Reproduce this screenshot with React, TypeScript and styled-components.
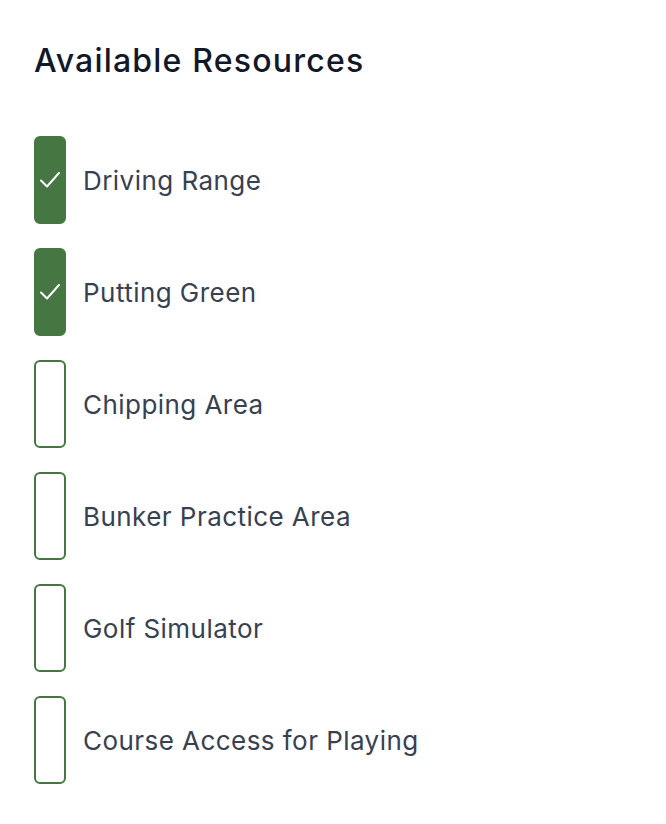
import React, { useState } from "react";
import styled, { createGlobalStyle } from "styled-components";

const Global = createGlobalStyle`
  html, body { margin: 0; padding: 0; background: #ffffff; }
  body { font-family: Inter, "Noto Sans", sans-serif; -webkit-font-smoothing: antialiased; }
`;

const Page = styled.div`
  padding: 41px 34px;
`;

const Title = styled.h2`
  margin: 0 0 55px 0;
  font-size: 32px;
  line-height: 40px;
  font-weight: 500;
  color: #111827;
  letter-spacing: 1.2px;
`;

const List = styled.div`
  display: flex;
  flex-direction: column;
  gap: 24px;
`;

const Row = styled.label`
  display: flex;
  align-items: center;
  gap: 17px;
  height: 88px;
  cursor: pointer;
`;

const Box = styled.span<{ $checked: boolean }>`
  box-sizing: border-box;
  width: 32px;
  height: 88px;
  border-radius: 6px;
  border: 2px solid #467642;
  background: ${(p) => (p.$checked ? "#467642" : "#ffffff")};
  display: flex;
  align-items: center;
  justify-content: center;
  flex-shrink: 0;
`;

const Label = styled.span`
  font-size: 26px;
  color: #374151;
  font-weight: 400;
  letter-spacing: 0.45px;
`;

const items = [
  { name: "Driving Range", checked: true },
  { name: "Putting Green", checked: true },
  { name: "Chipping Area", checked: false },
  { name: "Bunker Practice Area", checked: false },
  { name: "Golf Simulator", checked: false },
  { name: "Course Access for Playing", checked: false },
];

export default function App() {
  const [state, setState] = useState(items);
  return (
    <>
      <Global />
      <Page>
        <Title>Available Resources</Title>
        <List>
          {state.map((it, i) => (
            <Row
              key={it.name}
              onClick={() =>
                setState((s) => s.map((x, j) => (j === i ? { ...x, checked: !x.checked } : x)))
              }
            >
              <Box $checked={it.checked}>
                {it.checked && (
                  <svg width="22" height="22" viewBox="0 0 22 22" fill="none" stroke="#ffffff" strokeWidth="2" strokeLinecap="round" strokeLinejoin="round">
                    <path d="M2 11.5l6 6L20 4" />
                  </svg>
                )}
              </Box>
              <Label>{it.name}</Label>
            </Row>
          ))}
        </List>
      </Page>
    </>
  );
}
